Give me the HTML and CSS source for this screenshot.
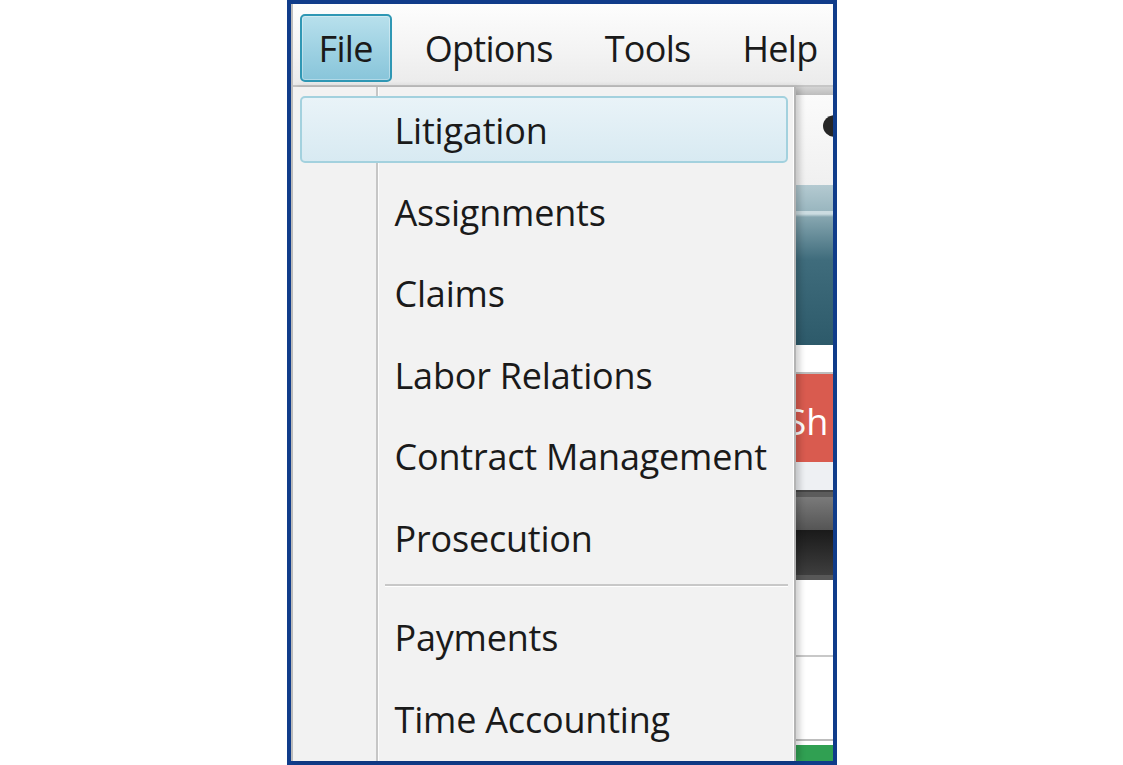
FILE: index.html
```html
<!DOCTYPE html>
<html lang="en">
<head>
  <meta charset="UTF-8">
  <title>File menu</title>
  <link rel="stylesheet" href="styles.css">
</head>
<body>

<div class="frame">
  <div class="window">
    <div class="menubar">
      <div class="menubar-item active">File</div>
      <div class="menubar-item">Options</div>
      <div class="menubar-item">Tools</div>
      <div class="menubar-item">Help</div>
    </div>

    <div class="workspace">
      <div class="dropdown">
        <div class="dropdown-item selected">Litigation</div>
        <div class="dropdown-item">Assignments</div>
        <div class="dropdown-item">Claims</div>
        <div class="dropdown-item">Labor Relations</div>
        <div class="dropdown-item">Contract Management</div>
        <div class="dropdown-item">Prosecution</div>
        <div class="separator"></div>
        <div class="dropdown-item">Payments</div>
        <div class="dropdown-item">Time Accounting</div>
      </div>

      <!-- what peeks out from behind the menu -->
      <div class="backdrop">
        <div class="bd-bar"></div>
        <div class="bd-header"><div class="bd-avatar"></div></div>
        <div class="bd-banner"></div>
        <div class="bd-white"></div>
        <div class="bd-red"><span>Sh</span></div>
        <div class="bd-light"></div>
        <div class="bd-dark"></div>
        <div class="bd-row"></div>
        <div class="bd-row second"></div>
        <div class="bd-gap"></div>
        <div class="bd-green"></div>
      </div>
    </div>
  </div>
</div>

</body>
</html>
```

FILE: styles.css
```css
* {
  box-sizing: border-box;
}

html, body {
  margin: 0;
  padding: 0;
  height: 100%;
  background: #ffffff;
  font-family: 'Open Sans', 'Noto Sans', sans-serif;
  color: #1a1a1a;
  overflow: hidden;
}

body {
  display: flex;
  justify-content: center;
}

.frame {
  width: 550px;
  height: 765px;
  border: 4px solid #103c8a;
}

.window {
  height: 100%;
  display: flex;
  flex-direction: column;
  border-left: 2px solid #bdbdbd;
  background: #f2f2f2;
}

/* menu bar */

.menubar {
  height: 83px;
  display: flex;
  align-items: flex-start;
  padding: 10px 0 0 7px;
  gap: 14px;
  background: linear-gradient(to bottom, #fdfdfd, #f3f3f3 60%, #ebebeb);
  border-bottom: 2px solid #c6c6c6;
  white-space: nowrap;
}

.menubar-item {
  height: 68px;
  padding: 1px 17px 0 17px;
  line-height: 63px;
  font-size: 36px;
  letter-spacing: -0.7px;
  border: 2px solid transparent;
  border-radius: 5px;
}

.menubar-item.active {
  border-color: #2f97b4;
  background: linear-gradient(to bottom, #b8e0ec, #9fd2e3 50%, #88c5da);
  box-shadow: inset 0 0 0 1px rgba(255,255,255,0.35);
}

/* dropdown */

.workspace {
  flex: 1;
  display: flex;
  min-height: 0;
}

.dropdown {
  width: 503px;
  flex-shrink: 0;
  display: flex;
  flex-direction: column;
  padding: 2px 0 1px 0;
  background:
    linear-gradient(to right, transparent 83px, #c6c6c6 83px, #c6c6c6 85px, #fdfdfd 85px, #fdfdfd 86px, transparent 86px),
    #f2f2f2;
  border-right: 2px solid #b4b4b4;
  box-shadow: inset -1px 0 0 #ffffff, 4px 0 6px rgba(0,0,0,0.18);
  position: relative;
  z-index: 1;
}

.dropdown-item {
  height: 67px;
  flex-shrink: 0;
  margin: 7px 6px 7.5px 7px;
  padding: 3px 0 0 93px;
  line-height: 60px;
  font-size: 36px;
  letter-spacing: -0.2px;
  white-space: nowrap;
  border: 2px solid transparent;
  border-radius: 5px;
}

.dropdown-item.selected {
  border-color: #a3d1de;
  background: linear-gradient(to bottom, #e9f3f8, #d8eaf2);
}

.separator {
  height: 3px;
  flex-shrink: 0;
  margin: 6px 6px 9px 92px;
  background: #c8c8c8;
  border-bottom: 1px solid #ffffff;
}

/* backdrop strip */

.backdrop {
  flex: 1;
  display: flex;
  flex-direction: column;
  overflow: hidden;
  background: #ffffff;
}

.bd-bar {
  height: 8px;
  background: linear-gradient(to bottom, #d4d4d4, #bdbdbd);
}

.bd-header {
  height: 90px;
  padding: 20px 0 0 27px;
  background: linear-gradient(to bottom, #fbfbfb, #f0f0f0);
}

.bd-avatar {
  width: 24px;
  height: 22px;
  border-radius: 50%;
  background: #262626;
}

.bd-banner {
  height: 160px;
  background: linear-gradient(to bottom,
    #b4cad1 0, #99b6bf 26px, #cbdce1 26px, #cbdce1 29px,
    #86a6b0 32px, #3f6c7c 75px, #2d5a6a 100%);
}

.bd-white {
  height: 27px;
  background: #ffffff;
}

.bd-red {
  height: 90px;
  padding-top: 8px;
  border-top: 2px solid #bdbdbd;
  background: #d95b4f;
  color: #ffffff;
  font-size: 36px;
  line-height: 80px;
  white-space: nowrap;
}

.bd-red span {
  margin-left: -9px;
}

.bd-light {
  height: 28px;
  background: #eef0f3;
}

.bd-dark {
  height: 90px;
  background: linear-gradient(to bottom,
    #444 0, #444 2px, #5c5c5c 2px, #5c5c5c 7px,
    #7a7a7a 7px, #555 40px, #1a1a1a 40px, #3e3e3e 85px,
    #575757 85px, #575757 90px);
}

.bd-row {
  height: 77px;
  background: #ffffff;
  border-bottom: 2px solid #c8c8c8;
}

.bd-row.second {
  height: 84px;
  border-bottom-color: #bdbdbd;
}

.bd-gap {
  height: 4px;
  background: #ffffff;
}

.bd-green {
  flex: 1;
  background: #30a052;
}
```
